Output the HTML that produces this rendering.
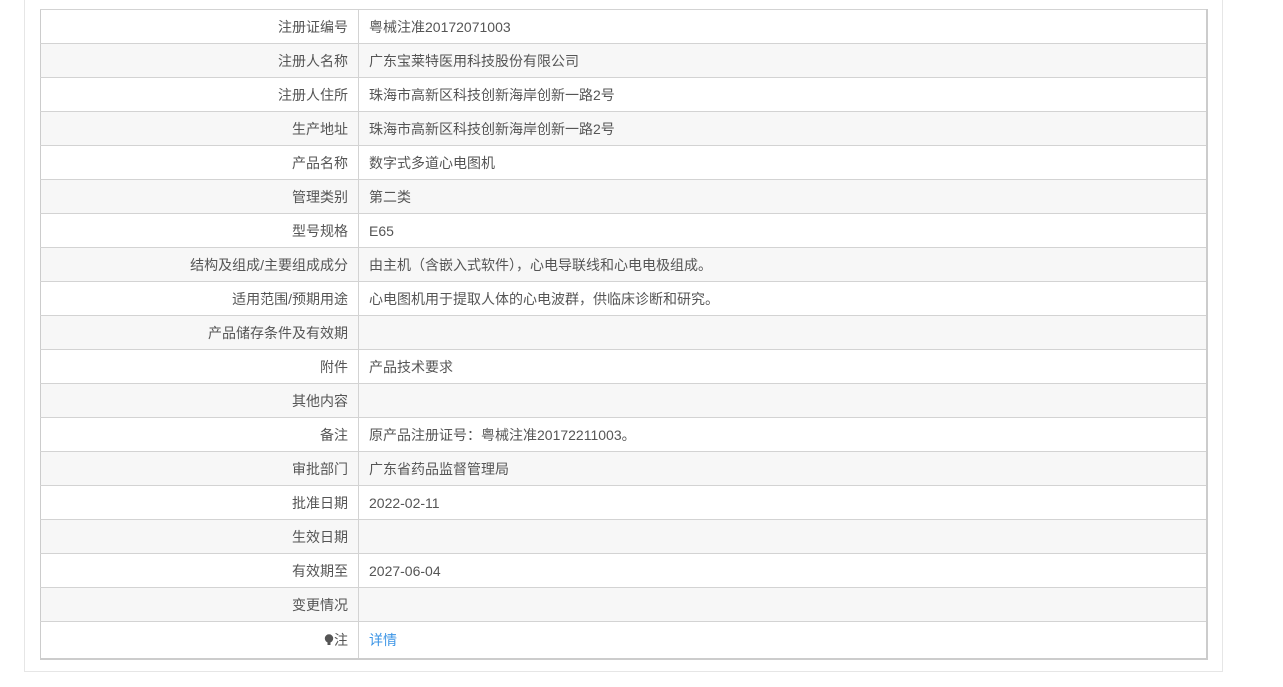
<!DOCTYPE html>
<html><head><meta charset="utf-8"><style>
body{margin:0;background:#fff;font-family:"Liberation Sans","Noto Sans CJK SC",sans-serif;}
.outer{position:absolute;left:24px;top:-1px;width:1199px;height:673px;border:1px solid #e6e6e6;border-top:none;box-sizing:border-box;}
table{position:absolute;left:40px;top:9px;width:1168px;border-collapse:collapse;border:1px solid #ccc;border-bottom:2px solid #ccc;border-right:2px solid #ccc;font-size:14px;color:#555;}
td{height:34px;border-top:1px solid #d3d3d3;padding:0 10px;box-sizing:border-box;}
td.l{width:318px;text-align:right;border-right:1px solid #d3d3d3;}
tr:nth-child(even) td{background:#f7f7f7;}
tr:last-child td{height:37px;}
a{color:#3d95e6;text-decoration:none;}
</style></head><body>
<div class="outer"></div>
<table>
<tr><td class="l">注册证编号</td><td>粤械注准20172071003</td></tr>
<tr><td class="l">注册人名称</td><td>广东宝莱特医用科技股份有限公司</td></tr>
<tr><td class="l">注册人住所</td><td>珠海市高新区科技创新海岸创新一路2号</td></tr>
<tr><td class="l">生产地址</td><td>珠海市高新区科技创新海岸创新一路2号</td></tr>
<tr><td class="l">产品名称</td><td>数字式多道心电图机</td></tr>
<tr><td class="l">管理类别</td><td>第二类</td></tr>
<tr><td class="l">型号规格</td><td>E65</td></tr>
<tr><td class="l">结构及组成/主要组成成分</td><td>由主机（含嵌入式软件），心电导联线和心电电极组成。</td></tr>
<tr><td class="l">适用范围/预期用途</td><td>心电图机用于提取人体的心电波群，供临床诊断和研究。</td></tr>
<tr><td class="l">产品储存条件及有效期</td><td></td></tr>
<tr><td class="l">附件</td><td>产品技术要求</td></tr>
<tr><td class="l">其他内容</td><td></td></tr>
<tr><td class="l">备注</td><td>原产品注册证号：粤械注准20172211003。</td></tr>
<tr><td class="l">审批部门</td><td>广东省药品监督管理局</td></tr>
<tr><td class="l">批准日期</td><td>2022-02-11</td></tr>
<tr><td class="l">生效日期</td><td></td></tr>
<tr><td class="l">有效期至</td><td>2027-06-04</td></tr>
<tr><td class="l">变更情况</td><td></td></tr>
<tr><td class="l"><svg width="10" height="12" viewBox="0 0 10 12" style="vertical-align:-1px"><ellipse cx="5" cy="4.5" rx="4.2" ry="4.2" fill="#555"/><rect x="3.5" y="8" width="3" height="3" fill="#555"/></svg>注</td><td><a>详情</a></td></tr>
</table>
</body></html>
